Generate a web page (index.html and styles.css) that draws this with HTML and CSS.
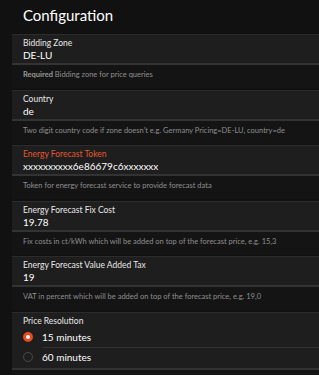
FILE: index.html
```html
<!DOCTYPE html>
<html lang="en">
<head>
  <meta charset="UTF-8" />
  <meta name="viewport" content="width=device-width, initial-scale=1" />
  <title>Configuration</title>
  <link rel="stylesheet" href="styles.css">
</head>
<body>
  <div class="page">
    <h1 class="title">Configuration</h1>

    <div class="group">
      <div class="field">
        <div class="label">Bidding Zone</div>
        <div class="value">DE-LU</div>
      </div>
      <div class="hint"><b>Required</b> Bidding zone for price queries</div>
    </div>

    <div class="group">
      <div class="field">
        <div class="label">Country</div>
        <div class="value">de</div>
      </div>
      <div class="hint">Two digit country code if zone doesn't e.g. Germany Pricing=DE-LU, country=de</div>
    </div>

    <div class="group">
      <div class="field">
        <div class="label label-error">Energy Forecast Token</div>
        <div class="value">xxxxxxxxxx6e86679c6xxxxxxx</div>
      </div>
      <div class="hint">Token for energy forecast service to provide forecast data</div>
    </div>

    <div class="group">
      <div class="field">
        <div class="label">Energy Forecast Fix Cost</div>
        <div class="value">19.78</div>
      </div>
      <div class="hint">Fix costs in ct/kWh which will be added on top of the forecast price, e.g. 15,3</div>
    </div>

    <div class="group">
      <div class="field">
        <div class="label">Energy Forecast Value Added Tax</div>
        <div class="value">19</div>
      </div>
      <div class="hint">VAT in percent which will be added on top of the forecast price, e.g. 19,0</div>
    </div>

    <div class="group">
      <div class="field field-radio">
        <div class="label">Price Resolution</div>
        <div class="radio-row">
          <span class="radio radio-on"></span>
          <span class="radio-text">15 minutes</span>
        </div>
        <div class="radio-row">
          <span class="radio"></span>
          <span class="radio-text">60 minutes</span>
        </div>
      </div>
      <div class="hint">Price resolution in minutes</div>
    </div>
  </div>
</body>
</html>
```

FILE: styles.css
```css
html, body {
  margin: 0;
  background: #111111;
  font-family: 'Lato', 'Open Sans', sans-serif;
  color: #fff;
  overflow: hidden;
}

.page {
  padding-left: 12px;
}

.title {
  margin: 0;
  padding: 5px 0 0 11px;
  height: 34px;
  box-sizing: border-box;
  font-size: 15px;
  font-weight: 400;
  line-height: 20px;
}

.group {
  margin-bottom: 1.5px;
  background: #141414;
}

.field {
  background: #1e1e1e;
  border-top: 1px solid #2c2c2c;
  border-bottom: 2px solid #333;
  padding: 3px 0 1px 11px;
}

.label {
  font-size: 8.5px;
  line-height: 11px;
  color: #e8e8e8;
}

.label-error {
  color: #e2562e;
}

.value {
  font-size: 10px;
  line-height: 13px;
  color: #fff;
}

.hint {
  height: 23px;
  padding: 4px 0 0 11px;
  box-sizing: border-box;
  font-size: 7.5px;
  line-height: 11px;
  color: #8f8f8f;
  white-space: nowrap;
}

.hint b {
  font-weight: 700;
  color: #9a9a9a;
}

.field-radio {
  padding-right: 0;
}

.radio-row {
  display: flex;
  align-items: center;
  height: 20px;
}

.radio-row + .radio-row .radio-text {
  border-top: 1px solid #333;
}

.radio {
  width: 10px;
  height: 10px;
  margin-right: 9px;
  border: 1px solid #4a4a4a;
  border-radius: 50%;
  box-sizing: border-box;
  flex-shrink: 0;
}

.radio-on {
  border: 3px solid #e8491d;
  background: #fff;
}

.radio-text {
  flex: 1;
  align-self: stretch;
  display: flex;
  align-items: center;
  font-size: 10px;
  color: #fff;
}
```
